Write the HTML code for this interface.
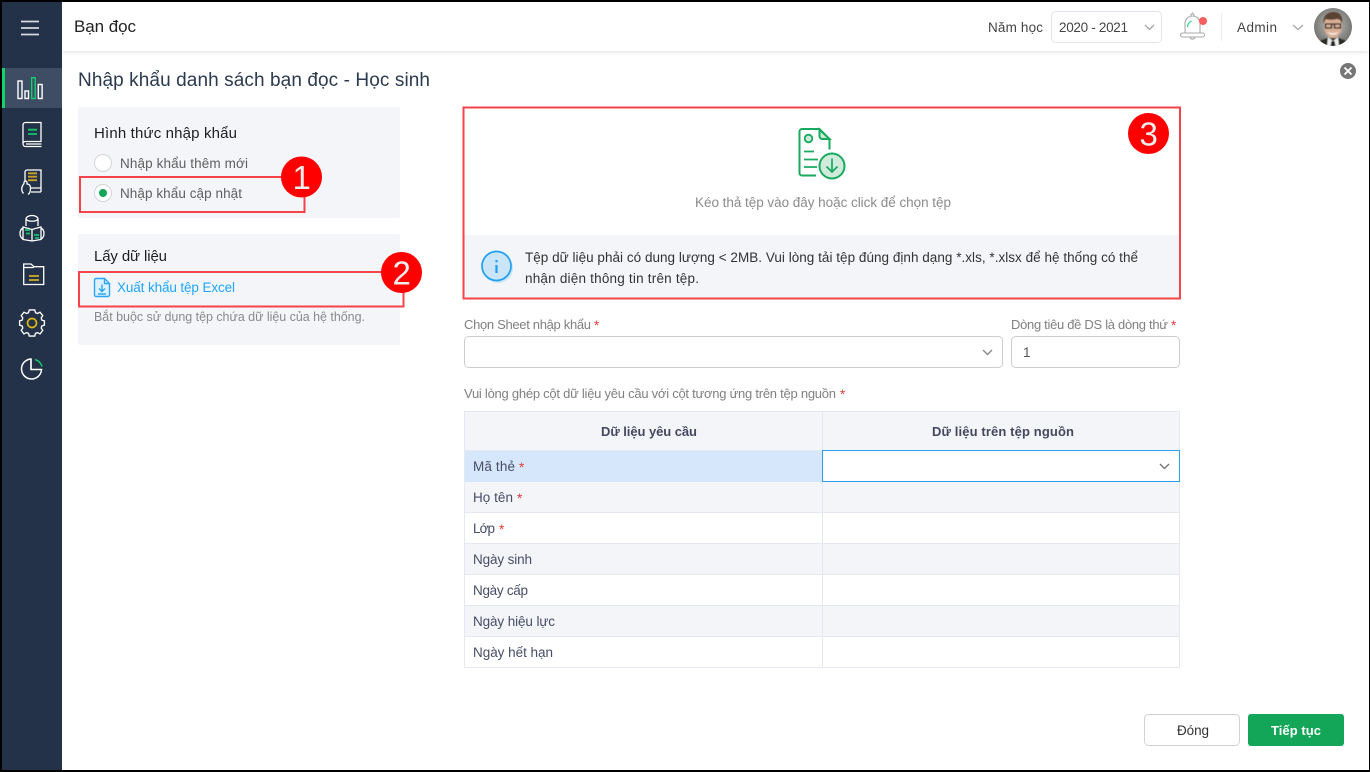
<!DOCTYPE html>
<html lang="vi"><head><meta charset="utf-8"><title>Nhập khẩu danh sách bạn đọc</title>
<style>
html,body{margin:0;padding:0;background:#fff}
svg{display:block}
text{font-family:"Liberation Sans",Arial,sans-serif;font-size:13.5px;fill:#555}
.g{fill:#5f5f5f}.l{fill:#808080;font-size:13px}.r{fill:#e53935}
.t{fill:#474d66;font-size:13.5px}.b{font-weight:bold;font-size:13px}
.s{fill:none;stroke:#fff;stroke-width:1.300}
.an{fill:none;stroke:#f44449;stroke-width:2}
.d{font-size:33px;fill:#eee}
</style></head><body>
<svg width="1370" height="772" viewBox="0 0 1370 772" xmlns="http://www.w3.org/2000/svg">
<defs>
<filter id="sh" x="-5%" y="-20%" width="110%" height="150%"><feDropShadow dx="0" dy="1" stdDeviation="2" flood-color="#000" flood-opacity=".12"/></filter>
<filter id="bl"><feGaussianBlur stdDeviation=".5"/></filter>
<radialGradient id="av" cx=".5" cy=".45" r=".6"><stop offset="0" stop-color="#c4c4c1"/><stop offset="1" stop-color="#686866"/></radialGradient>
<clipPath id="avc"><circle cx="1333" cy="27" r="19"/></clipPath>
</defs>
<rect width="1370" height="772" fill="#fff"/>
<!-- header -->
<rect x="62" y="2" width="1307" height="49" fill="#fff" filter="url(#sh)"/>
<text x="74" y="32" textLength="62" style="font-size:17px;fill:#222">Bạn đọc</text>
<text x="988" y="32" textLength="55" style="fill:#444">Năm học</text>
<rect x="1051.500" y="11.500" width="110" height="31" rx="4" fill="#fff" stroke="#e4e4f0"/>
<text x="1059" y="32" textLength="69" style="fill:#444">2020 - 2021</text>
<path d="M1145 25l4.500 4.500 4.500-4.500" fill="none" stroke="#a5a5a5" stroke-width="1.300"/>
<path d="M1185 32.500v-9a7.500 7.500 0 0 1 15 0v9M1182.500 33h20a2 2 0 0 1 0 4h-20a2 2 0 0 1 0-4zM1190 37.500a2.700 2.500 0 0 0 5 0M1190.500 15.500l2-2.500 2 2.500" fill="none" stroke="#a9a9a9" stroke-width="1.100"/>
<path d="M1187.500 27a7 7 0 0 1 4-6" fill="none" stroke="#27d98b" stroke-width="1.200"/>
<circle cx="1203" cy="21" r="4" fill="#f75f5f"/>
<rect x="1221" y="13" width="1" height="28" fill="#ececec"/>
<text x="1237" y="32" textLength="40" style="fill:#444">Admin</text>
<path d="M1293 25l5 4.500 5-4.500" fill="none" stroke="#a5a5a5" stroke-width="1.300"/>
<!-- avatar -->
<circle cx="1333" cy="27" r="19" fill="url(#av)"/>
<g clip-path="url(#avc)"><g filter="url(#bl)">
<path d="M1314 46c3-5 9-6 13-8h12c4 2 10 3 13 8z" fill="#2a2a28"/>
<path d="M1328 37l5 4 5-4 1 9h-12z" fill="#eee"/><path d="M1331.500 41h3l1 5h-5z" fill="#222"/>
<ellipse cx="1333" cy="26" rx="9" ry="12" fill="#d9b096"/>
<path d="M1323.500 24c-1-8 4-12 10-12s10 4 8.500 12c-1-3-2-5-5-5-4 1-9 1-11 0-1 1-2 3-2.500 5z" fill="#5a4230"/>
<path d="M1325 24h16M1325.500 24h6v4h-6zM1334.500 24h6v4h-6z" fill="none" stroke="#1d1d1d" stroke-width="1.300"/>
<path d="M1328 31.500c2 2.500 8 2.500 10 0-1 4-9 4-10 0z" fill="#fff"/>
</g></g>
<!-- sidebar -->
<rect x="2" y="2" width="60" height="768" fill="#233249"/>
<rect x="2" y="68" width="60" height="40" fill="#3f4d64"/>
<rect x="2" y="68" width="3" height="40" fill="#10d36a"/>
<path d="M21 21.500h18M21 28h18M21 34.500h18" stroke="#d5d9df" stroke-width="1.700" fill="none"/>
<!-- chart -->
<g fill="none" stroke-width="1.400">
<rect x="18" y="81" width="4" height="17.500" stroke="#fff"/>
<rect x="25" y="91" width="3.500" height="7.500" stroke="#fff"/>
<rect x="31.700" y="77.700" width="3.500" height="20.800" stroke="#13cf70"/>
<rect x="38.300" y="84.500" width="3.800" height="14" stroke="#fff"/>
</g>
<!-- book -->
<path class="s" d="M23 144v-19a2.500 2.500 0 0 1 2.500-2.500h15.500v19H25.500a2.500 2.500 0 0 0 0 5H41.500M26 144h15.500"/>
<path d="M28 129.700h9M28 134h9" stroke="#13c46a" stroke-width="1.800"/>
<!-- hand book -->
<path class="s" d="M25 182v-10a2 2 0 0 1 2-2h14v18H31M31 192h10M41 188v4"/>
<path class="s" d="M23.500 193.500c-2-2-2.500-6-.5-8.500l1-1.500v-1a1.500 1.500 0 0 1 3 0v1.500c2.500 0 3.500 1.500 3.500 4.500s-1 5-2.500 6"/>
<path d="M28 173.300h9M28 176.700h9M28 180.200h9" stroke="#c9a227" stroke-width="1.800"/>
<!-- reader -->
<path class="s" d="M26 226v-7a6 3.500 0 0 1 12 0v7M26 219c2 3 10 3 12 0"/>
<path class="s" d="M23 227l9 2.500 9-2.500v12.500l-9 1.500-9-1.500zM32 229.500v11.500M23 228c-2 1-3 3-3 5.500s1 4.500 3 5.500M41 228c2 1 3 3 3 5.500s-1 4.500-3 5.500"/>
<path d="M25 230h5M26 233.500h4M34 235h5M35 238h4" stroke="#13c46a" stroke-width="1.700"/>
<!-- folder -->
<path class="s" d="M23.700 264v20.500h20v-17.800H34l-3-2.700z"/>
<path d="M23.700 267.500h10" class="s"/>
<path d="M29 276h10M29 280h10" stroke="#d2ae25" stroke-width="1.700"/>
<!-- gear -->
<path d="M28.500 311.500h7l1 3.500 2.500 1 3.300-1.700 3.500 4.500-2 3 .8 2.700 3.300 1v5.500l-3.300 1-.8 2.700 2 3-3.500 4.500-3.300-1.700-2.500 1-1 3.500h-7l-1-3.500-2.500-1-3.300 1.700-3.500-4.500 2-3-.8-2.700-3.300-1v-5.500l3.300-1 .8-2.700-2-3 3.500-4.500 3.300 1.700 2.500-1z" fill="none" stroke="#fff" stroke-width="1.700" transform="translate(7.040 67) scale(.78)"/>
<circle cx="32" cy="323" r="4.500" fill="none" stroke="#e2b714" stroke-width="1.700"/>
<!-- pie -->
<path class="s" d="M31 359a10 10 0 1 0 10.500 10.500H31z" style="stroke-width:1.500"/>
<path d="M35 359.500a10.500 10.500 0 0 1 7 7" fill="none" stroke="#13c46a" stroke-width="1.500"/>
<path class="s" d="M31 359v10.500"/>

<!-- title -->
<text x="78" y="86" textLength="352" style="font-size:19px;fill:#2b3a4f">Nhập khẩu danh sách bạn đọc - Học sinh</text>
<circle cx="1348" cy="71" r="8" fill="#777"/>
<path d="M1344.500 67.500l7 7M1351.500 67.500l-7 7" stroke="#fff" stroke-width="1.800"/>

<!-- left cards -->
<rect x="78" y="107" width="322" height="111" rx="2" fill="#f4f5f9"/>
<rect x="78" y="234" width="322" height="111" rx="2" fill="#f4f5f9"/>
<text x="94" y="138" textLength="143" style="font-size:15px;fill:#1e1e1e">Hình thức nhập khẩu</text>
<circle cx="103" cy="163" r="8.500" fill="#fff" stroke="#d5d5d5"/>
<text x="120" y="168" textLength="128" class="g">Nhập khẩu thêm mới</text>
<circle cx="103" cy="193" r="8.500" fill="#fff" stroke="#d5d5d5"/>
<circle cx="103" cy="193" r="4" fill="#13a658"/>
<text x="120" y="198" textLength="122" class="g">Nhập khẩu cập nhật</text>
<text x="94" y="261" textLength="73" style="font-size:15px;fill:#1e1e1e">Lấy dữ liệu</text>
<path d="M96 278.500h8.500l5 5v11.500a1.500 1.500 0 0 1-1.500 1.500H96a1.500 1.500 0 0 1-1.500-1.500v-15a1.500 1.500 0 0 1 1.500-1.500zM104.500 278.500v5h5" fill="#dff1fe" stroke="#27a7f5" stroke-width="1.400"/>
<path d="M102 284.500v6.500M99 288.500l3 3 3-3M98 294h8" fill="none" stroke="#27a7f5" stroke-width="1.400"/>
<text x="117" y="292" textLength="118" style="fill:#1ea6fb">Xuất khẩu tệp Excel</text>
<text x="94" y="321" textLength="271" style="font-size:12.500px;fill:#8a8a8a">Bắt buộc sử dụng tệp chứa dữ liệu của hệ thống.</text>

<!-- drop zone -->
<rect x="464" y="235" width="716" height="63" fill="#f4f5f9"/>
<path d="M802 129h17.500l10 10v10.500M829.500 139h-7a3 3 0 0 1-3-3v-7M816 175.500h-14a2.500 2.500 0 0 1-2.500-2.500v-41.500A2.500 2.500 0 0 1 802 129" fill="none" stroke="#19aa5f" stroke-width="2"/>
<path d="M819.500 129.500l10 9.500h-7a3 3 0 0 1-3-3z" fill="#d0ebdb" stroke="#19aa5f" stroke-width="2"/>
<circle cx="808.500" cy="138.500" r="3.800" fill="#d0ebdb" stroke="#19aa5f" stroke-width="1.800"/>
<path d="M804 151.500h10M804 159.500h14M804 167h13" stroke="#19aa5f" stroke-width="1.700"/>
<circle cx="832" cy="166" r="12.500" fill="#d0ebdb" stroke="#19aa5f" stroke-width="2"/>
<path d="M832 158.500v13M826.500 166.500l5.500 5.500 5.500-5.500" fill="none" stroke="#19aa5f" stroke-width="1.700"/>
<text x="695" y="207" textLength="256" style="fill:#8b8b8b">Kéo thả tệp vào đây hoặc click để chọn tệp</text>
<circle cx="498" cy="268" r="15" fill="#cbe5f8"/>
<circle cx="496.500" cy="266" r="14.500" fill="#cbe5f8" stroke="#1e9ff0" stroke-width="1.700"/>
<path d="M496.500 265v8M496.500 260v2.300" stroke="#1e9ff0" stroke-width="2.200"/>
<text x="525" y="262" textLength="613" style="fill:#333">Tệp dữ liệu phải có dung lượng &lt; 2MB. Vui lòng tải tệp đúng định dạng *.xls, *.xlsx để hệ thống có thể</text>
<text x="525" y="283" textLength="174" style="fill:#333">nhận diện thông tin trên tệp.</text>

<!-- form -->
<text x="464" y="329" textLength="127" class="l">Chọn Sheet nhập khẩu</text><text x="594" y="330" class="r">*</text>
<text x="1011" y="329" textLength="157" class="l">Dòng tiêu đề DS là dòng thứ</text><text x="1171" y="330" class="r">*</text>
<rect x="464.500" y="336.500" width="538" height="31" rx="4" fill="#fff" stroke="#cdcdcd"/>
<path d="M983 350l4.500 4.500 4.500-4.500" fill="none" stroke="#888" stroke-width="1.400"/>
<rect x="1011.500" y="336.500" width="168" height="31" rx="4" fill="#fff" stroke="#cdcdcd"/>
<text x="1023" y="357" style="fill:#555">1</text>
<text x="464" y="398" textLength="372" class="l">Vui lòng ghép cột dữ liệu yêu cầu với cột tương ứng trên tệp nguồn</text><text x="840" y="399" class="r">*</text>

<!-- table -->
<rect x="464.500" y="411.500" width="715" height="256" fill="#fff" stroke="#e5e7f1"/>
<rect x="465" y="412" width="714" height="39" fill="#f4f5f9"/>
<rect x="465" y="451" width="357" height="31" fill="#d6e6fb"/>
<rect x="465" y="482" width="714" height="30.500" fill="#f4f5f9"/>
<rect x="465" y="544" width="714" height="30.500" fill="#f4f5f9"/>
<rect x="465" y="606" width="714" height="30.500" fill="#f4f5f9"/>
<path d="M465 512.500h714M465 543.500h714M465 574.500h714M465 605.500h714M465 636.500h714M465 450.500h714M822.500 412v255" stroke="#e5e7f1" fill="none"/>
<rect x="822.500" y="450.500" width="357" height="31" fill="#fff" stroke="#2a9fe8"/>
<path d="M1160 464l4.500 4.500 4.500-4.500" fill="none" stroke="#777" stroke-width="1.400"/>
<text x="601" y="436" textLength="96" class="b" style="fill:#45475f">Dữ liệu yêu cầu</text>
<text x="932" y="436" textLength="142" class="b" style="fill:#45475f">Dữ liệu trên tệp nguồn</text>
<text x="473" y="471" textLength="42" class="t">Mã thẻ</text><text x="519" y="472" class="r">*</text>
<text x="473" y="502" textLength="40" class="t">Họ tên</text><text x="517" y="503" class="r">*</text>
<text x="473" y="533" textLength="22" class="t">Lớp</text><text x="499" y="534" class="r">*</text>
<text x="473" y="564" textLength="59" class="t">Ngày sinh</text>
<text x="473" y="595" textLength="55" class="t">Ngày cấp</text>
<text x="473" y="626" textLength="82" class="t">Ngày hiệu lực</text>
<text x="473" y="657" textLength="80" class="t">Ngày hết hạn</text>

<!-- buttons -->
<rect x="1144.500" y="714.500" width="95" height="31" rx="4" fill="#fff" stroke="#d2d2d2"/>
<text x="1177" y="735" textLength="32" style="fill:#333">Đóng</text>
<rect x="1248" y="714" width="96" height="32" rx="3" fill="#13a658"/>
<text x="1271" y="735" textLength="50" class="b" style="fill:#fff">Tiếp tục</text>

<!-- annotations -->
<rect class="an" x="80" y="177" width="224.500" height="35"/>
<rect class="an" x="79" y="272" width="324.500" height="34.500"/>
<rect class="an" x="463.500" y="107.500" width="716.500" height="191"/>
<circle cx="301.500" cy="177" r="20.500" fill="#f00"/><text x="292.500" y="189" class="d">1</text>
<circle cx="401.500" cy="272.500" r="20.500" fill="#f00"/><text x="392.500" y="284.500" class="d">2</text>
<circle cx="1148.500" cy="133.500" r="20.500" fill="#f00"/><text x="1139.500" y="145.500" class="d">3</text>

<!-- frame -->
<path d="M0 0H1370V772H0z M2 2V770H1369V2z" fill="#000" fill-rule="evenodd"/>
</svg>
</body></html>
